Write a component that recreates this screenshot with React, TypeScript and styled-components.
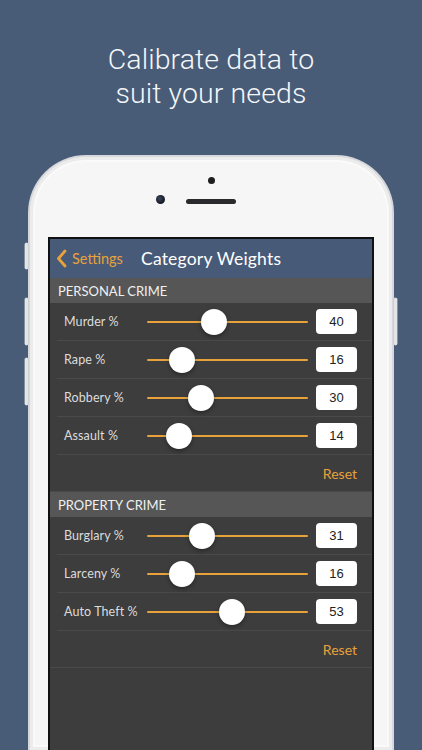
import React from "react";
import styled, { createGlobalStyle } from "styled-components";

const Global = createGlobalStyle`
  html, body { margin: 0; padding: 0; background: #485b77; }
  * { box-sizing: border-box; }
`;

const Page = styled.div`
  width: 422px;
  height: 750px;
  overflow: hidden;
  background: #485b77;
  display: flex;
  flex-direction: column;
  align-items: center;
`;

const Headline = styled.h1`
  margin: 0;
  padding-top: 43px;
  font-family: Roboto, "Liberation Sans", sans-serif;
  font-weight: 300;
  font-size: 28.5px;
  line-height: 34px;
  color: #f4f6f9;
  text-align: center;
  letter-spacing: 0.1px;
`;

const Phone = styled.div`
  position: relative;
  margin-top: 44px;
  width: 366px;
  flex: 1;
  border-radius: 58px 58px 0 0;
  background: #f6f6f6;
  border: 2px solid #d6d8db;
  border-bottom: none;
  box-shadow: inset 0 0 0 3px #ececec, inset 0 0 0 5px #fafafa;
  display: flex;
  flex-direction: column;
  align-items: center;
`;

const SideButton = styled.div<{ $side: "left" | "right"; $top: number; $h: number }>`
  position: absolute;
  ${(p) => (p.$side === "left" ? "left: -5px;" : "right: -5px;")}
  top: ${(p) => p.$top}px;
  width: 3px;
  height: ${(p) => p.$h}px;
  background: #e4e5e7;
  border-radius: 2px;
  box-shadow: 0 0 0 0.5px #c4c7cb;
`;

const Bezel = styled.div`
  height: 80px;
  width: 100%;
  display: grid;
  grid-template-columns: 1fr auto 1fr;
  grid-template-rows: 20px 7px 15px 5px;
  justify-items: center;
  align-items: center;
`;

const FrontDot = styled.div`
  grid-column: 2;
  grid-row: 2;
  width: 7px;
  height: 7px;
  border-radius: 50%;
  background: #1e1e20;
`;

const Camera = styled.div`
  grid-column: 1;
  grid-row: 3 / 5;
  align-self: end;
  justify-self: end;
  margin-right: 21px;
  width: 9px;
  height: 9px;
  border-radius: 50%;
  background: radial-gradient(circle at 40% 40%, #3a4560, #14161c 70%);
`;

const Speaker = styled.div`
  grid-column: 2;
  grid-row: 4;
  width: 50px;
  height: 5px;
  border-radius: 3px;
  background: #2a2a2c;
`;

const Screen = styled.div`
  width: 326px;
  flex: 1;
  border: 2px solid #111;
  border-bottom: none;
  background: #3d3d3d;
  display: flex;
  flex-direction: column;
`;

const NavBar = styled.div`
  height: 39px;
  background: #475a78;
  display: flex;
  align-items: center;
  padding-left: 6px;
  font-family: Lato, "Open Sans", sans-serif;
`;

const Back = styled.div`
  display: flex;
  align-items: center;
  gap: 5px;
  color: #e7a23c;
  font-size: 14.5px;
  width: 85px;
`;

const Title = styled.div`
  color: #ffffff;
  font-size: 17.5px;
  letter-spacing: 0.2px;
`;

const SectionHeader = styled.div`
  height: 25px;
  background: #565656;
  color: #f0f0f0;
  font-family: Lato, "Open Sans", sans-serif;
  font-size: 13px;
  letter-spacing: 0;
  display: flex;
  align-items: center;
  padding-left: 8px;
`;

const Row = styled.div`
  height: 38px;
  margin-left: 7px;
  border-bottom: 1px solid #4a4a4a;
  display: grid;
  grid-template-columns: 83px 161px 1fr;
  align-items: center;
  padding-left: 7px;
  padding-right: 15px;
`;

const Label = styled.div`
  color: #dcdcdc;
  font-family: Lato, "Open Sans", sans-serif;
  font-size: 12.5px;
  letter-spacing: 0.1px;
  white-space: nowrap;
`;

const Track = styled.div`
  position: relative;
  height: 2px;
  background: #e7a23c;
  border-radius: 1px;
`;

const Thumb = styled.div`
  position: absolute;
  top: 50%;
  width: 26px;
  height: 26px;
  margin-left: -13px;
  margin-top: -13px;
  border-radius: 50%;
  background: #ffffff;
  box-shadow: 0 2px 4px rgba(0, 0, 0, 0.35);
`;

const ValueBox = styled.div`
  justify-self: end;
  width: 41px;
  height: 25px;
  background: #ffffff;
  border-radius: 4px;
  display: flex;
  align-items: center;
  justify-content: center;
  color: #222;
  font-family: "Liberation Sans", Arial, sans-serif;
  font-size: 13px;
`;

const ResetRow = styled.div`
  height: 37px;
  border-bottom: 1px solid #4a4a4a;
  display: flex;
  align-items: center;
  justify-content: flex-end;
  padding-right: 15px;
  color: #e7a23c;
  font-family: Lato, "Open Sans", sans-serif;
  font-size: 14px;
`;

const Slider = ({ value }: { value: number }) => {
  const left = 13 + (value / 100) * (161 - 26);
  return (
    <Track>
      <Thumb style={{ left }} />
    </Track>
  );
};

const sections = [
  {
    title: "PERSONAL CRIME",
    rows: [
      ["Murder %", 40],
      ["Rape %", 16],
      ["Robbery %", 30],
      ["Assault %", 14],
    ] as [string, number][],
  },
  {
    title: "PROPERTY CRIME",
    rows: [
      ["Burglary %", 31],
      ["Larceny %", 16],
      ["Auto Theft %", 53],
    ] as [string, number][],
  },
];

export default function App() {
  return (
    <>
      <Global />
      <Page>
        <Headline>
          Calibrate data to
          <br />
          suit your needs
        </Headline>
        <Phone>
          <SideButton $side="left" $top={86} $h={26} />
          <SideButton $side="left" $top={141} $h={47} />
          <SideButton $side="left" $top={201} $h={47} />
          <SideButton $side="right" $top={141} $h={47} />
          <Bezel>
            <FrontDot />
            <Camera />
            <Speaker />
          </Bezel>
          <Screen>
            <NavBar>
              <Back>
                <svg width="11" height="19" viewBox="0 0 11 19">
                  <path d="M9 2 L2.5 9.5 L9 17" fill="none" stroke="#e7a23c" strokeWidth="2.8" strokeLinecap="round" strokeLinejoin="round" />
                </svg>
                Settings
              </Back>
              <Title>Category Weights</Title>
            </NavBar>
            {sections.map((s) => (
              <React.Fragment key={s.title}>
                <SectionHeader>{s.title}</SectionHeader>
                {s.rows.map(([label, v]) => (
                  <Row key={label}>
                    <Label>{label}</Label>
                    <Slider value={v} />
                    <ValueBox>{v}</ValueBox>
                  </Row>
                ))}
                <ResetRow>Reset</ResetRow>
              </React.Fragment>
            ))}
          </Screen>
        </Phone>
      </Page>
    </>
  );
}
